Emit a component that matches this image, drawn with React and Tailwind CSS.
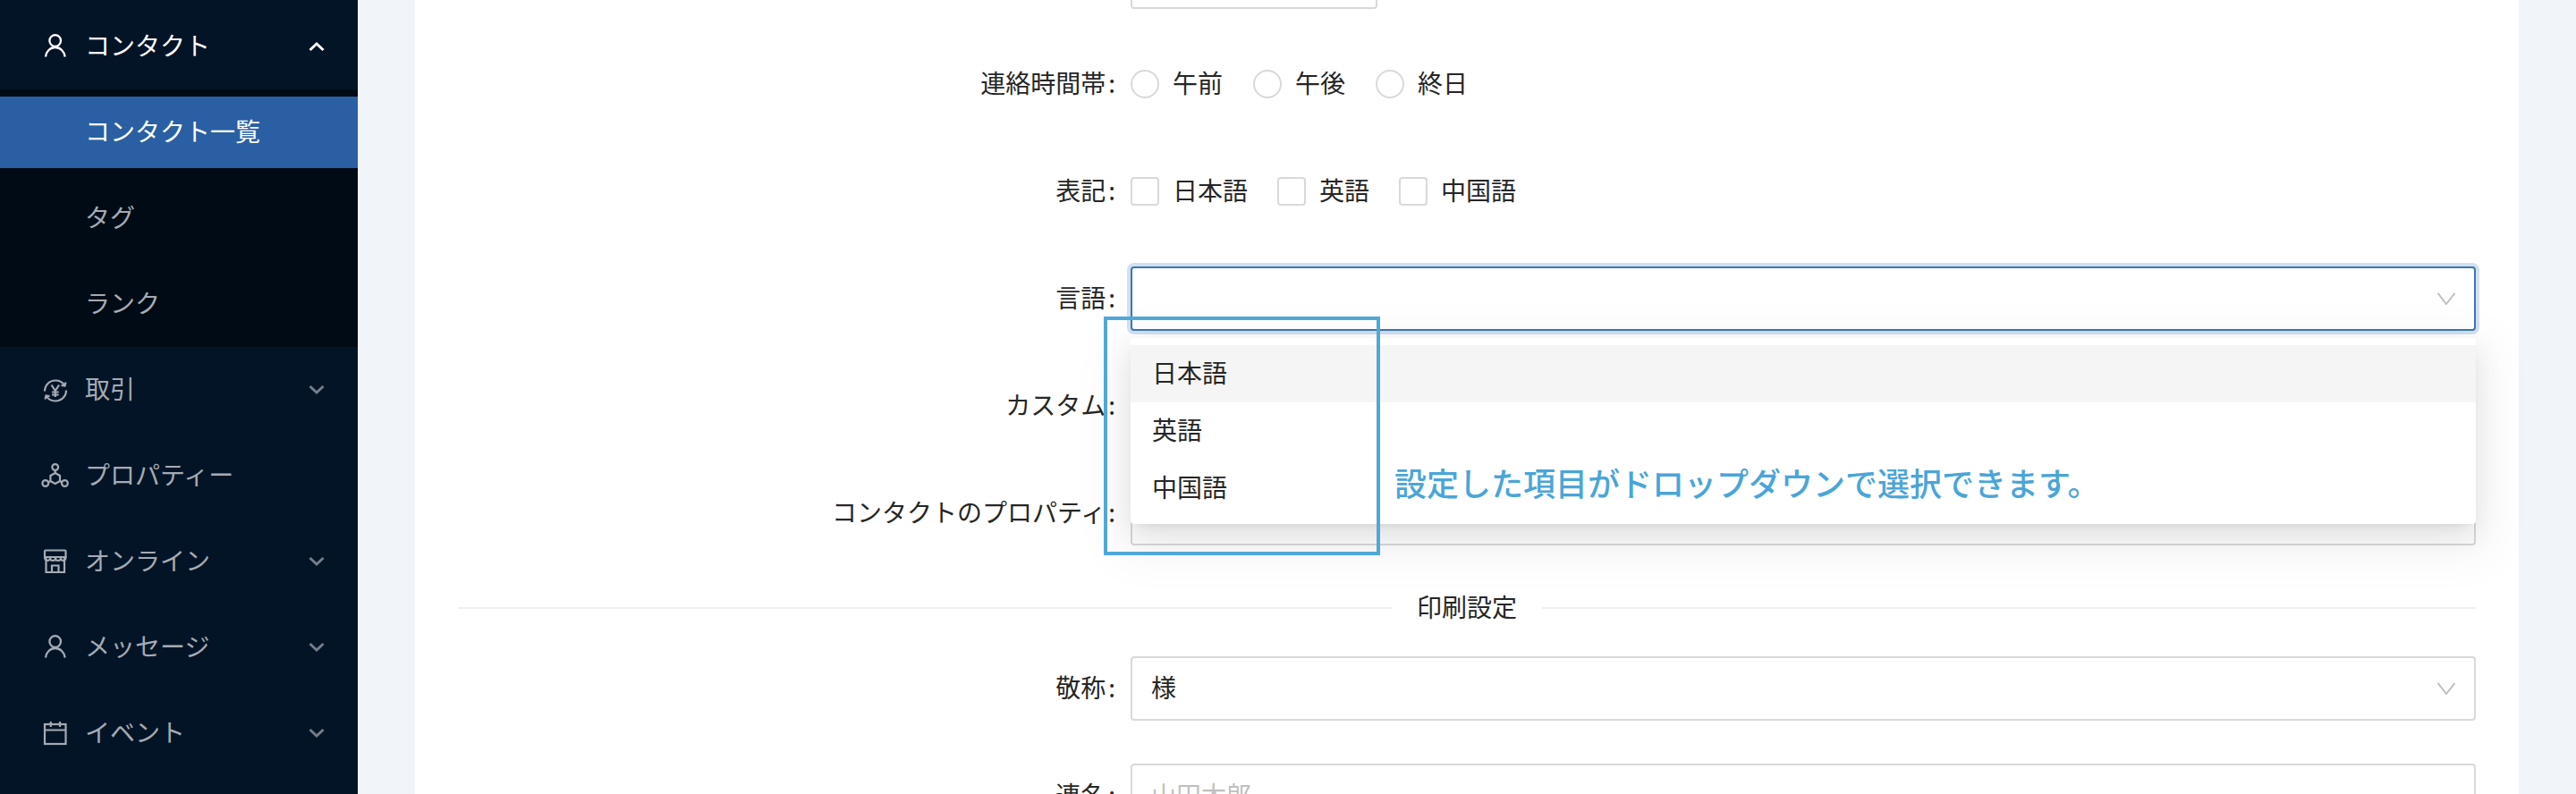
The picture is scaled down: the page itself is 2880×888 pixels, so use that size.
import React from "react";

const PersonIcon = () => (
  <svg width="44" height="44" viewBox="0 0 44 44" fill="none" stroke="currentColor" strokeWidth="2.3">
    <circle cx="21.7" cy="15.5" r="6.3" />
    <path d="M11 33.5c.6-6 5-10.5 10.7-10.5s10.2 4.500 11 10.500" />
  </svg>
);

const YenIcon = () => (
  <svg width="44" height="44" viewBox="0 0 44 44" fill="none" stroke="currentColor" strokeWidth="2.2">
    <path d="M10 23.500c0-6.800 5.300-12 12-12 4.300 0 8 2 10.300 5.500" />
    <path d="M34 22.500c0 6.800-5.300 12-12 12-4.300 0-8-2-10.300-5.500" />
    <path d="M33.500 13.500l-1 4-4-.7M10.500 32.500l1-4 4 .7" />
    <path d="M17.500 16.500l4.300 6.500 4.300-6.500M21.800 23v7M18 24.500h7.600M18 27.500h7.600" />
  </svg>
);

const NodesIcon = () => (
  <svg width="44" height="44" viewBox="0 0 44 44" fill="none" stroke="currentColor" strokeWidth="2.2">
    <circle cx="21.700" cy="12.500" r="3.400" />
    <circle cx="10.800" cy="30.500" r="3.400" />
    <circle cx="32.400" cy="30.500" r="3.400" />
    <path d="M21.700 19l5.300 3v6l-5.300 3-5.300-3v-6z" />
    <path d="M21.700 16v3M13.800 29.500l2.600-1.500M29.400 29.500l-2.400-1.500" />
  </svg>
);

const ShopIcon = () => (
  <svg width="44" height="44" viewBox="0 0 44 44" fill="none" stroke="currentColor" strokeWidth="2.2">
    <path d="M11 9.500h21.500a1 1 0 0 1 1 1V17H10v-6.500a1 1 0 0 1 1-1z" />
    <path d="M11.500 17v17h20.500V17" />
    <path d="M10 17c0 5 6 5 6 1 0 4 6 4 6 0 0 4 6 4 6 0 0 4 5.500 4 5.500-1" />
    <path d="M18 34v-7.500h7.500V34" />
  </svg>
);

const CalendarIcon = () => (
  <svg width="44" height="44" viewBox="0 0 44 44" fill="none" stroke="currentColor" strokeWidth="2.2">
    <rect x="10" y="12" width="23.500" height="22" />
    <path d="M10 18.500h23.500M16.800 9v6M27 9v6" />
  </svg>
);

const Arrow = ({ up }) => (
  <svg width="18" height="12" viewBox="0 0 18 12" fill="none" stroke="currentColor" strokeWidth="3" className={up ? "" : "opacity-70"}>
    <path d={up ? "M1.500 10L9 3l7.500 7" : "M1.500 2L9 9l7.500-7"} />
  </svg>
);

const SelectArrow = () => (
  <svg width="20" height="14" viewBox="0 0 20 14" fill="none" stroke="#bfbfbf" strokeWidth="2">
    <path d="M.5 .8L10 13 19.500 .8" />
  </svg>
);

const menuItems = [
  { label: "取引", icon: <YenIcon />, arrow: true },
  { label: "プロパティー", icon: <NodesIcon /> },
  { label: "オンライン", icon: <ShopIcon />, arrow: true },
  { label: "メッセージ", icon: <PersonIcon />, arrow: true },
  { label: "イベント", icon: <CalendarIcon />, arrow: true },
];

function Sidebar() {
  return (
    <aside className="w-[400px] shrink-0 bg-[#041427] pt-[12px] text-[28px] text-[#a5abb3]">
      <div className="flex h-[80px] items-center pl-[40px] pr-[37px] text-white">
        <PersonIcon />
        <span className="ml-[11px] flex-1 pb-[4px]">コンタクト</span>
        <Arrow up />
      </div>
      <div className="mt-[8px] flex flex-col gap-[16px] bg-[#010b15] py-[8px]">
        <div className="flex h-[80px] items-center bg-[#2a5fa3] pb-[4px] pl-[95px] text-white">コンタクト一覧</div>
        <div className="flex h-[80px] items-center pb-[4px] pl-[95px]">タグ</div>
        <div className="flex h-[80px] items-center pb-[4px] pl-[95px]">ランク</div>
      </div>
      <div className="mt-[8px] flex flex-col gap-[16px]">
        {menuItems.map((item) => (
          <div key={item.label} className="flex h-[80px] items-center pl-[40px] pr-[37px]">
            {item.icon}
            <span className="ml-[11px] flex-1 pb-[4px]">{item.label}</span>
            {item.arrow && <Arrow />}
          </div>
        ))}
      </div>
    </aside>
  );
}

function Row({ label, children }) {
  return (
    <div className="mb-[48px] flex h-[72px] items-center">
      <div className="w-[752px] shrink-0 pb-[4px] pr-[17px] text-right">
        {label && (
          <>
            {label}
            <span className="ml-[3px]">:</span>
          </>
        )}
      </div>
      {children}
    </div>
  );
}

const boxClass = "flex h-[72px] flex-1 items-center justify-between rounded-[4px] border-2 border-[#d9d9d9] bg-white pl-[21px] pr-[21px]";

function LanguageSelect() {
  return (
    <div className="relative flex-1">
      <div className="flex h-[72px] items-center justify-end rounded-[4px] border-2 border-[#3b78b3] bg-white pr-[21px] shadow-[0_0_0_4px_#d3e0ef]">
        <SelectArrow />
      </div>

      <div className="absolute left-0 right-0 top-[80px] z-10 h-[208px] rounded-[4px] bg-white py-[8px] shadow-[0_6px_12px_-8px_rgba(0,0,0,0.12),0_12px_32px_0_rgba(0,0,0,0.08),0_18px_56px_16px_rgba(0,0,0,0.05)]">
        <div className="flex h-[64px] items-center bg-[#f5f5f5] pb-[4px] pl-[24px]">日本語</div>
        <div className="flex h-[64px] items-center pb-[4px] pl-[24px]">英語</div>
        <div className="flex h-[64px] items-center pb-[4px] pl-[24px]">中国語</div>
      </div>

      {/* annotation drawn on top of the screenshot */}
      <div className="absolute left-[-30px] top-[56px] z-20 h-[267px] w-[309px] border-[4px] border-[#4fa8d8]" />
      <div className="absolute left-[295px] top-[216px] z-20 whitespace-nowrap text-[36px] font-medium leading-[50px] text-[#4aa5d8]">
        設定した項目がドロップダウンで選択できます。
      </div>
    </div>
  );
}

function Form() {
  return (
    <div className="mt-[-62px]">
      <Row label="">
        <div className="h-[72px] w-[276px] rounded-[4px] border-2 border-[#d9d9d9]" />
      </Row>

      <Row label="連絡時間帯">
        <div className="flex items-center gap-[18px]">
          {["午前", "午後", "終日"].map((t) => (
            <label key={t} className="flex items-center">
              <span className="h-[32px] w-[32px] rounded-full border-2 border-[#d9d9d9] bg-white" />
              <span className="pb-[4px] pl-[15px] pr-[16px]">{t}</span>
            </label>
          ))}
        </div>
      </Row>

      <Row label="表記">
        <div className="flex items-center gap-[17px]">
          {["日本語", "英語", "中国語"].map((t) => (
            <label key={t} className="flex items-center">
              <span className="h-[32px] w-[32px] rounded-[4px] border-2 border-[#d9d9d9] bg-white" />
              <span className="pb-[4px] pl-[15px] pr-[16px]">{t}</span>
            </label>
          ))}
        </div>
      </Row>

      <Row label="言語">
        <LanguageSelect />
      </Row>

      <Row label="カスタム">
        <div className={boxClass} />
      </Row>

      <Row label="コンタクトのプロパティ">
        <div className={boxClass} />
      </Row>

      <div className="mb-[32px] flex h-[44px] items-center">
        <div className="h-[2px] flex-1 bg-[#f0f0f0]" />
        <span className="px-[28px] pb-[4px]">印刷設定</span>
        <div className="h-[2px] flex-1 bg-[#f0f0f0]" />
      </div>

      <Row label="敬称">
        <div className={boxClass}>
          <span className="pb-[4px]">様</span>
          <SelectArrow />
        </div>
      </Row>

      <Row label="連名">
        <div className={`${boxClass} text-[#bfbfbf]`}>
          <span className="pb-[4px]">山田太郎</span>
        </div>
      </Row>
    </div>
  );
}

export default function App() {
  return (
    <div className="flex h-[888px] w-[2880px] overflow-hidden font-['Noto_Sans_CJK_JP','Liberation_Sans',sans-serif] text-[28px] text-[#262626]">
      <Sidebar />
      <main className="flex-1 bg-[#f1f4f9] px-[64px]">
        <div className="flex h-[888px] flex-col bg-white px-[48px]">
          <Form />
        </div>
      </main>
    </div>
  );
}
